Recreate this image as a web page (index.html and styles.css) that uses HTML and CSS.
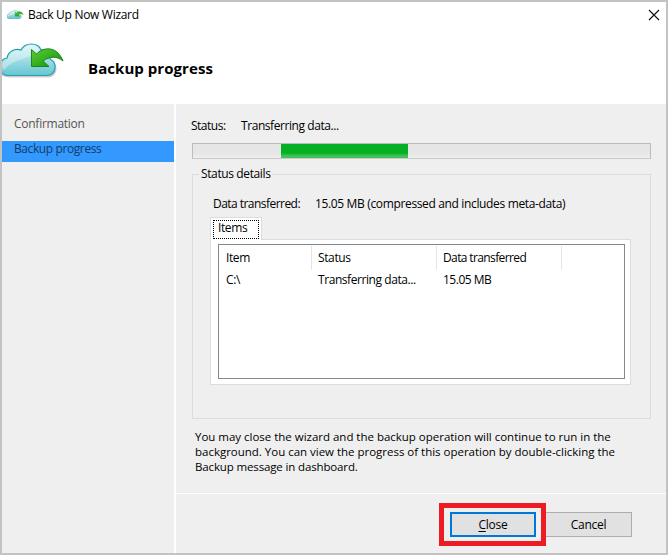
FILE: index.html
```html
<!DOCTYPE html>
<html lang="en">
<head>
<meta charset="utf-8">
<title>Back Up Now Wizard</title>
<link rel="stylesheet" href="styles.css">
</head>
<body>
<svg class="defs" width="0" height="0" aria-hidden="true">
  <defs>
    <linearGradient id="cloud" x1="0" y1="0" x2="0" y2="1"><stop offset="0" stop-color="#d6f3f6"/><stop offset=".5" stop-color="#a0dde4"/><stop offset="1" stop-color="#65c5d2"/></linearGradient>
    <linearGradient id="arrow" x1="0" y1="0" x2="1" y2="1"><stop offset="0" stop-color="#64c936"/><stop offset=".5" stop-color="#35b01e"/><stop offset="1" stop-color="#128916"/></linearGradient>
    <symbol id="logo" viewBox="0 0 66 38">
      <path d="M9 34.500H49C57 34 60 22 51 17C49 10 46 8 42 7C39 0 25-1 21 7C14 5 8 10 7 15C-1 16-4 33 6 34Z" fill="#555" opacity=".3"/>
      <path d="M7 32.500H47C56 32 58 20 50 16C50 9 46 6 41 7C38-1 25-1 21 7C14 5 8 9 7 15C-2 16-3 31 7 32.500Z" fill="url(#cloud)" stroke="#269eaf" stroke-width="1.200"/>
      <path d="M8 16C9 9 15 6 22 8.500C25 1 36 0 39 7C31 17 15 14 4 27C0 23 2 17 8 16Z" fill="#fff" opacity=".35"/>
      <path d="M31.500 6.500L36.500 11C46 2 58 5 63 18C57 13 50 13 43 18L49 23.500H31.500Z" fill="url(#arrow)" stroke="#128b1b" stroke-width="1"/>
    </symbol>
  </defs>
</svg>
<div class="window">
  <header class="header">
    <div class="titlebar">
      <svg class="app-icon"><use href="#logo"/></svg>
      <span class="title">Back Up Now Wizard</span>
      <svg class="close-icon" viewBox="0 0 10 10"><path d="M0 0L10 10M10 0L0 10" stroke="#111" stroke-width="1.150"/></svg>
    </div>
    <div class="banner">
      <svg class="logo"><use href="#logo"/></svg>
      <h1>Backup progress</h1>
    </div>
  </header>
  <div class="body">
    <nav class="sidebar">
      <div class="step">Confirmation</div>
      <div class="step active">Backup progress</div>
    </nav>
    <div class="content">
      <main class="main">
        <div class="status"><span class="status-label">Status:</span><span class="transferring">Transferring data...</span></div>
        <div class="progress"><div class="chunk"></div></div>
        <section class="group">
          <h2><span>Status details</span></h2>
          <div class="transfer"><span class="data-label">Data transferred:</span><span class="amount">15.05 MB (compressed and includes meta-data)</span></div>
          <div class="tabs"><div class="tab"><span>Items</span></div></div>
          <div class="panel">
            <div class="list">
              <div class="row head"><div class="item">Item</div><div class="state">Status</div><div class="data">Data transferred</div></div>
              <div class="row"><div>C:\</div><div class="transferring">Transferring data...</div><div class="size">15.05 MB</div></div>
            </div>
          </div>
        </section>
        <p class="note"><span>You may close the wizard and the backup operation will continue to run in the</span><br><span>background. You can view the progress of this operation by double-clicking the</span><br><span class="last">Backup message in dashboard.</span></p>
      </main>
      <footer class="footer">
        <div class="highlight"><button class="primary"><u>C</u>lose</button></div>
        <button class="cancel">Cancel</button>
      </footer>
    </div>
  </div>
</div>
</body>
</html>
```
FILE: styles.css
```css
* { box-sizing: border-box; }
body { margin: 0; font: 12px/15px "Open Sans", "Noto Sans", sans-serif; letter-spacing: -.38px; color: #000; overflow: hidden; }
.defs { position: absolute; }
.window { width: 668px; height: 555px; border: 2px solid #c3c3c3; background: #fff; display: flex; flex-direction: column; }
.header { height: 102px; }
.titlebar { height: 25px; display: flex; align-items: center; padding: 0 5px; }
.app-icon { width: 17px; height: 10px; margin-right: 4px; }
.title { letter-spacing: -.3px; }
.close-icon { width: 10px; height: 10px; margin: 0 2px 0 auto; overflow: visible; }
.banner { display: flex; align-items: flex-start; padding-top: 16px; overflow: hidden; }
.logo { width: 66px; height: 38px; margin-left: -2px; }
h1 { margin: 15px 0 0 22px; font-size: 15px; line-height: 20px; letter-spacing: .06px; }
.title, h1, .step, span, .row div { white-space: nowrap; }
.body { flex: 1; display: flex; gap: 2px; }
.sidebar { width: 172px; background: #efefef; padding-top: 12px; color: #555; }
.step { height: 25px; padding-left: 12px; line-height: 16px; letter-spacing: -.26px; }
.active { height: 21px; background: #39f; color: #123d69; letter-spacing: -.4px; }
.content { width: 490px; display: flex; flex-direction: column; background: #efefef; }
.main { height: 389px; padding: 14px 15px 0; }
.status { display: flex; }
.status-label { width: 50px; letter-spacing: -.5px; }
.transferring { letter-spacing: -.43px; }
.progress { height: 16px; margin: 10px 0 0 1px; border: 1px solid #bcbcbc; border-bottom-color: #cacaca; background: linear-gradient(#e6e6e6 65%, #efefef); }
.chunk { width: 127px; height: 14px; margin-left: 88px; background: linear-gradient(#06b025 65%, #42c25a 85%, #42c25a); }
.group { height: 245px; margin: 15px 0 0 1px; border: 1px solid #dcdcdc; padding: 0 19px 0 17px; }
h2 { margin: -10px 0 0 -11px; height: 17px; font: inherit; line-height: 17px; }
h2 span { background: #efefef; padding: 0 2px; display: inline-block; }
.transfer { display: flex; margin: 14px 0 0 3px; }
.data-label { width: 102px; letter-spacing: -.54px; }
.amount { letter-spacing: -.35px; }
.tabs { display: flex; height: 22px; margin-top: 6px; }
.tab { width: 52px; height: 23px; background: #fff; border: 1px solid #dcdcdc; border-bottom: 0; padding: 2px; }
.tab span { display: block; width: 46px; height: 19px; border: 1px dotted #000; padding-left: 4px; line-height: 13px; }
.panel { height: 146px; background: linear-gradient(#dcdcdc, #dcdcdc) right top / calc(100% - 51px) 1px no-repeat #fff; border: 1px solid #dcdcdc; border-top: 0; padding: 5px 5px 0 7px; }
.list { height: 135px; border: 1px solid #828790; padding-top: 1px; }
.row { display: grid; grid-template-columns: 93px 125px 125px; line-height: 20px; }
.row div { padding-left: 6px; }
.row div:first-child { padding-left: 7px; }
.head { line-height: 24px; }
.head div { height: 24px; border-right: 1px solid #e5e5e5; }
.data { letter-spacing: -.62px; }
.size { letter-spacing: -.5px; }
.note { margin: 10px 0 0 4px; font-size: 11.5px; letter-spacing: -.015px; }
.last { letter-spacing: -.14px; }
.footer { flex: 1; border-top: 1px solid #fff; display: flex; align-items: flex-start; padding: 9px 34px 0 0; justify-content: flex-end; }
.highlight { width: 107px; height: 43px; border: 5px solid #ed1c24; padding: 4px 5px 0 6px; }
button { width: 86px; height: 25px; padding: 0; background: #e1e1e1; border: 1px solid #adadad; font: inherit; color: inherit; letter-spacing: -.25px; }
.primary { border: 2px solid #0078d7; display: block; }
u { text-underline-offset: 2px; }
.cancel { margin-top: 9px; border-left: 0; }
```
